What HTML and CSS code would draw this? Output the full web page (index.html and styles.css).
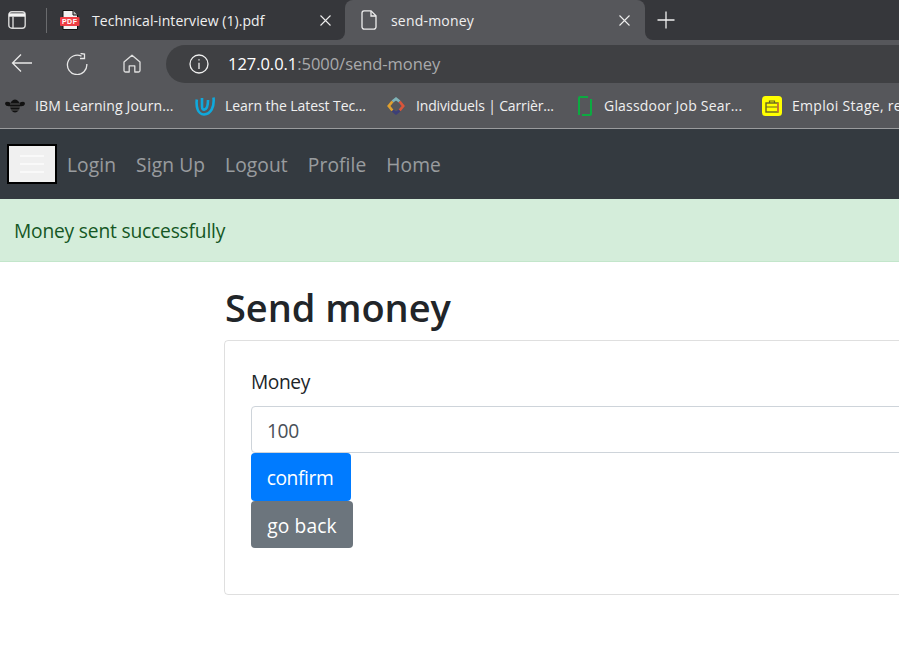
FILE: index.html
```html
<!DOCTYPE html>
<html lang="en">
<head>
<meta charset="utf-8">
<title>send-money</title>
<link rel="stylesheet" href="styles.css">
</head>
<body>
<header class="browser">
  <div class="tabstrip">
    <div class="strip-left">
      <span class="sidebtn">
        <svg width="18" height="18" viewBox="0 0 18 18" fill="none" stroke="#d8d8d8" stroke-width="1.4"><rect x="0.8" y="0.8" width="16.4" height="16.4" rx="3"/><path d="M1 4H17" stroke="#f4f4f4" stroke-width="3.400"/><path d="M5 5.500V17"/></svg>
      </span>
      <span class="tabsep"></span>
      <div class="tab tab-pdf">
        <svg class="tabicon" width="20" height="20" viewBox="0 0 20 20"><path d="M3 .5H13L17.500 5V19.500H3Z" fill="#f2f2f2" stroke="#111" stroke-width="1"/><path d="M13 .5V5H17.500" fill="#bbb" stroke="#111"/><rect x="0" y="7" width="19.500" height="9" rx="1" fill="#ee3d44"/><text x="9.700" y="14.300" class="pdfmark">PDF</text></svg>
        <span class="tabtitle">Technical-interview (1).pdf</span>
        <svg class="tabclose" width="11" height="11" viewBox="0 0 11 11" stroke="#eee" stroke-width="1.1"><path d="M.5.5l10 10M10.500.5l-10 10"/></svg>
      </div>
    </div>
    <div class="tab tab-active">
      <svg class="tabicon" width="16" height="20" viewBox="0 0 16 20" fill="none" stroke="#eee" stroke-width="1.3"><path d="M3 .8H10L15 5.800V17A2.200 2.200 0 0 1 12.800 19.200H3.200A2.200 2.200 0 0 1 1 17V3A2.200 2.200 0 0 1 3 .8Z"/><path d="M10 1V6H15"/></svg>
      <span class="tabtitle">send-money</span>
      <svg class="tabclose" width="11" height="11" viewBox="0 0 11 11" stroke="#eee" stroke-width="1.1"><path d="M.5.5l10 10M10.500.5l-10 10"/></svg>
    </div>
    <div class="strip-right">
      <svg class="newtab" width="18" height="18" viewBox="0 0 18 18" stroke="#f0f0f0" stroke-width="1.300"><path d="M9 .5V17.500M.5 9H17.500"/></svg>
    </div>
  </div>
  <div class="toolbar">
    <svg class="tool tool-back" width="22" height="20" viewBox="0 0 22 20" fill="none" stroke="#e8e8e8" stroke-width="1.3"><path d="M21 10H1.500M10 1.500L1.500 10L10 18.500"/></svg>
    <svg class="tool tool-reload" width="22" height="22" viewBox="0 0 22 22" fill="none" stroke="#e8e8e8" stroke-width="1.300"><path d="M15.500 3.200A9.700 9.700 0 1 0 20.800 11"/><path d="M14.500 .5L18.500 1V5.500H14"/></svg>
    <svg class="tool tool-home" width="18" height="19" viewBox="0 0 18 19" fill="none" stroke="#e0e0e0" stroke-width="1.300"><path d="M9 1.200L1 8V16.500A1.500 1.500 0 0 0 2.500 18H6.200V11.800H11.800V18H15.500A1.500 1.500 0 0 0 17 16.500V8Z" stroke-linejoin="round"/></svg>
    <div class="omnibox">
      <svg class="info" width="20" height="20" viewBox="0 0 20 20" fill="none" stroke="#f0f0f0" stroke-width="1.300"><circle cx="10" cy="10" r="9"/><path d="M10 8.800V15"/><path d="M10 5.200V6.600"/></svg>
      <span class="url"><span class="host">127.0.0.1</span>:5000/send-money</span>
    </div>
  </div>
  <nav class="bookmarks">
    <a class="bm bm-1">
      <svg class="fav" width="22" height="16" viewBox="0 0 22 16"><path d="M7 5Q1 2 1 6Q2 9 7 8ZM15 5Q21 2 21 6Q20 9 15 8Z" fill="#111"/><ellipse cx="11" cy="8" rx="5" ry="6.500" fill="#111"/><path d="M6 6H16M6 9H16M7 12H15" stroke="#666" stroke-width=".8"/></svg>
      <span>IBM Learning Journ...</span>
    </a>
    <a class="bm bm-2">
      <svg class="fav" width="20" height="20" viewBox="0 0 20 20" fill="none" stroke="#0fa9dc" stroke-width="2.600"><path d="M1.800 3.500C1 11 2.500 18 9 18.500C16 18 19.500 11 18.500 1.500"/><path d="M7 2V10.500C7 13.500 8.500 14 9.500 13.500C12 13 13 9 13 4"/></svg>
      <span>Learn the Latest Tec...</span>
    </a>
    <a class="bm bm-3">
      <svg class="fav" width="18" height="18" viewBox="0 0 20 20" fill="none" stroke-width="3"><path d="M6 5L10 2L14 5" stroke="#7fb3b8"/><path d="M14 5L18 10L14 15" stroke="#d9553a"/><path d="M14 15L10 18L6 15" stroke="#3c3f78"/><path d="M6 15L2 10L6 5" stroke="#e0a02e"/></svg>
      <span>Individuels | Carrièr...</span>
    </a>
    <a class="bm bm-4">
      <svg class="fav" width="14" height="20" viewBox="0 0 14 20" fill="none" stroke="#0caa41" stroke-width="2"><path d="M1 19V2Q1 1 2 1H10"/><path d="M13 3V18Q13 19 12 19H4"/></svg>
      <span>Glassdoor Job Sear...</span>
    </a>
    <a class="bm bm-5">
      <svg class="fav" width="20" height="20" viewBox="0 0 20 20"><rect width="20" height="20" rx="3.500" fill="#ffff00"/><rect x="4" y="7" width="12" height="9" fill="none" stroke="#666622" stroke-width="1.400"/><path d="M7.500 7V5H12.500V7M4 11H16" fill="none" stroke="#666622" stroke-width="1.200"/><path d="M16 7V16" stroke="#e2703a" stroke-width="1.400"/></svg>
      <span>Emploi Stage, recrutement</span>
    </a>
  </nav>
</header>
<nav class="navbar">
  <button class="toggler" type="button" aria-label="Menu"><span></span><span></span><span></span></button>
  <a class="navlink">Login</a>
  <a class="navlink">Sign Up</a>
  <a class="navlink">Logout</a>
  <a class="navlink">Profile</a>
  <a class="navlink">Home</a>
</nav>
<div class="alert">Money sent successfully</div>
<main class="content">
  <h1 class="title">Send money</h1>
  <form class="card">
    <label class="label" for="money">Money</label>
    <input class="input" id="money" type="text" value="100">
    <button class="btn btn-primary" type="button">confirm</button>
    <button class="btn btn-secondary" type="button">go back</button>
  </form>
</main>
</body>
</html>
```
FILE: styles.css
```css
* { box-sizing: border-box; }
html, body { margin: 0; height: 100%; overflow: hidden; background: #fff; }
body { font-family: "Open Sans", "Noto Sans", sans-serif; color: #212529; }

.browser { color: #f0f0f0; font-size: 14px; }
.tabstrip { height: 40px; background: linear-gradient(#36373b 50%, #56575b 50%); display: flex; align-items: stretch; }
.strip-left { display: flex; align-items: center; background: #36373b; border-bottom-right-radius: 8px; }
.strip-right { flex: 1; display: flex; align-items: center; background: #36373b; border-bottom-left-radius: 8px; }
.sidebtn { width: 46px; display: flex; padding-left: 8px; }
.tabsep { width: 1px; height: 25px; background: #6a6b6e; }
.tab { height: 40px; display: flex; align-items: center; position: relative; }
.tab-pdf { width: 298px; padding-left: 13px; }
.tab-active { width: 300px; padding-left: 16px; background: #56575b; border-radius: 8px 8px 0 0; }
.tabtitle { margin-left: 12px; white-space: nowrap; letter-spacing: 0.06px; }
.tab-active .tabtitle { margin-left: 14px; letter-spacing: 0.2px; }
.tabclose { position: absolute; left: 274px; top: 15px; }
.tab-pdf .tabclose { left: 273px; }
.pdfmark { font-family: "Liberation Sans", sans-serif; font-size: 7px; font-weight: 700; letter-spacing: .5px; fill: #fff; text-anchor: middle; }
.newtab { margin-left: 12px; }

.toolbar { height: 45px; padding-top: 3px; background: #56575b; display: flex; align-items: center; }
.tool { flex: none; }
.tool-back { margin-left: 11px; margin-top: -3px; }
.tool-reload { margin-left: 33px; }
.tool-home { margin-left: 35px; margin-top: -1px; }
.omnibox { flex: 1; height: 38px; margin-left: 25px; background: #3f4043; border-radius: 19px 0 0 19px; display: flex; align-items: center; padding-left: 23px; }
.url { margin-left: 19px; margin-bottom: 2px; font-size: 16.500px; letter-spacing: -0.04px; color: #a9aaac; }
.host { color: #fff; }

.bookmarks { height: 44px; padding-bottom: 2px; background: #56575b; border-bottom: 1px solid #9a9b9d; display: flex; align-items: center; white-space: nowrap; overflow: hidden; }
.bm { display: flex; align-items: center; flex: none; }
.fav { flex: none; }
.bm span { margin-left: 9px; }
.bm-1 { width: 191px; margin-left: 4px; letter-spacing: 0.13px; }
.bm-2 { width: 192px; letter-spacing: -0.07px; }
.bm-2 span { margin-left: 10px; }
.bm-3 { width: 191px; letter-spacing: -0.15px; }
.bm-3 span { margin-left: 11px; }
.bm-4 { width: 184px; letter-spacing: 0.2px; }
.bm-4 span { margin-left: 12px; }
.bm-5 { letter-spacing: 0.3px; }
.bm-5 span { margin-left: 10px; }

.navbar { height: 70px; background: #343a40; display: flex; align-items: center; padding-left: 7px; }
.toggler { width: 50px; height: 40px; background: #f0f0f0; border: 2px solid #000; padding: 0; display: flex; flex-direction: column; justify-content: center; gap: 6px; align-items: center; }
.toggler span { display: block; width: 24px; height: 2px; background: #f9f9f9; }
.navlink { font-size: 19.200px; color: rgba(255, 255, 255, .5); padding: 0 10px; letter-spacing: 0.1px; }

.alert { height: 63px; background: #d4edda; border-bottom: 1px solid #c3e6cb; color: #155724; font-size: 19.200px; padding: 18px 14px 0; letter-spacing: -0.18px; }

.content { padding-left: 224px; width: 1100px; }
.title { margin: 21px 0 4px; font-size: 38px; font-weight: 600; line-height: 48px; letter-spacing: -0.05px; height: 53px; padding-left: 1px; }
.card { border: 1px solid rgba(0, 0, 0, .125); border-radius: 4px; height: 255px; padding: 26px; }
.label { display: block; font-size: 19.200px; line-height: 29px; margin-bottom: 10px; letter-spacing: -0.4px; }
.input { display: block; width: 100%; height: 47px; border: 1px solid #ced4da; border-radius: 4px; padding: 2px 15px 0; font: inherit; font-size: 19.200px; color: #495057; background: #fff; letter-spacing: -0.4px; }
.btn { display: block; border: 0; border-radius: 4px; color: #fff; font: inherit; font-size: 19.200px; letter-spacing: -0.4px; padding: 0; }
.btn-primary { width: 100px; height: 48px; background: #007bff; padding-right: 2px; }
.btn-secondary { width: 102px; height: 47px; padding-top: 2px; background: #6c757d; letter-spacing: 0.13px; }
```
